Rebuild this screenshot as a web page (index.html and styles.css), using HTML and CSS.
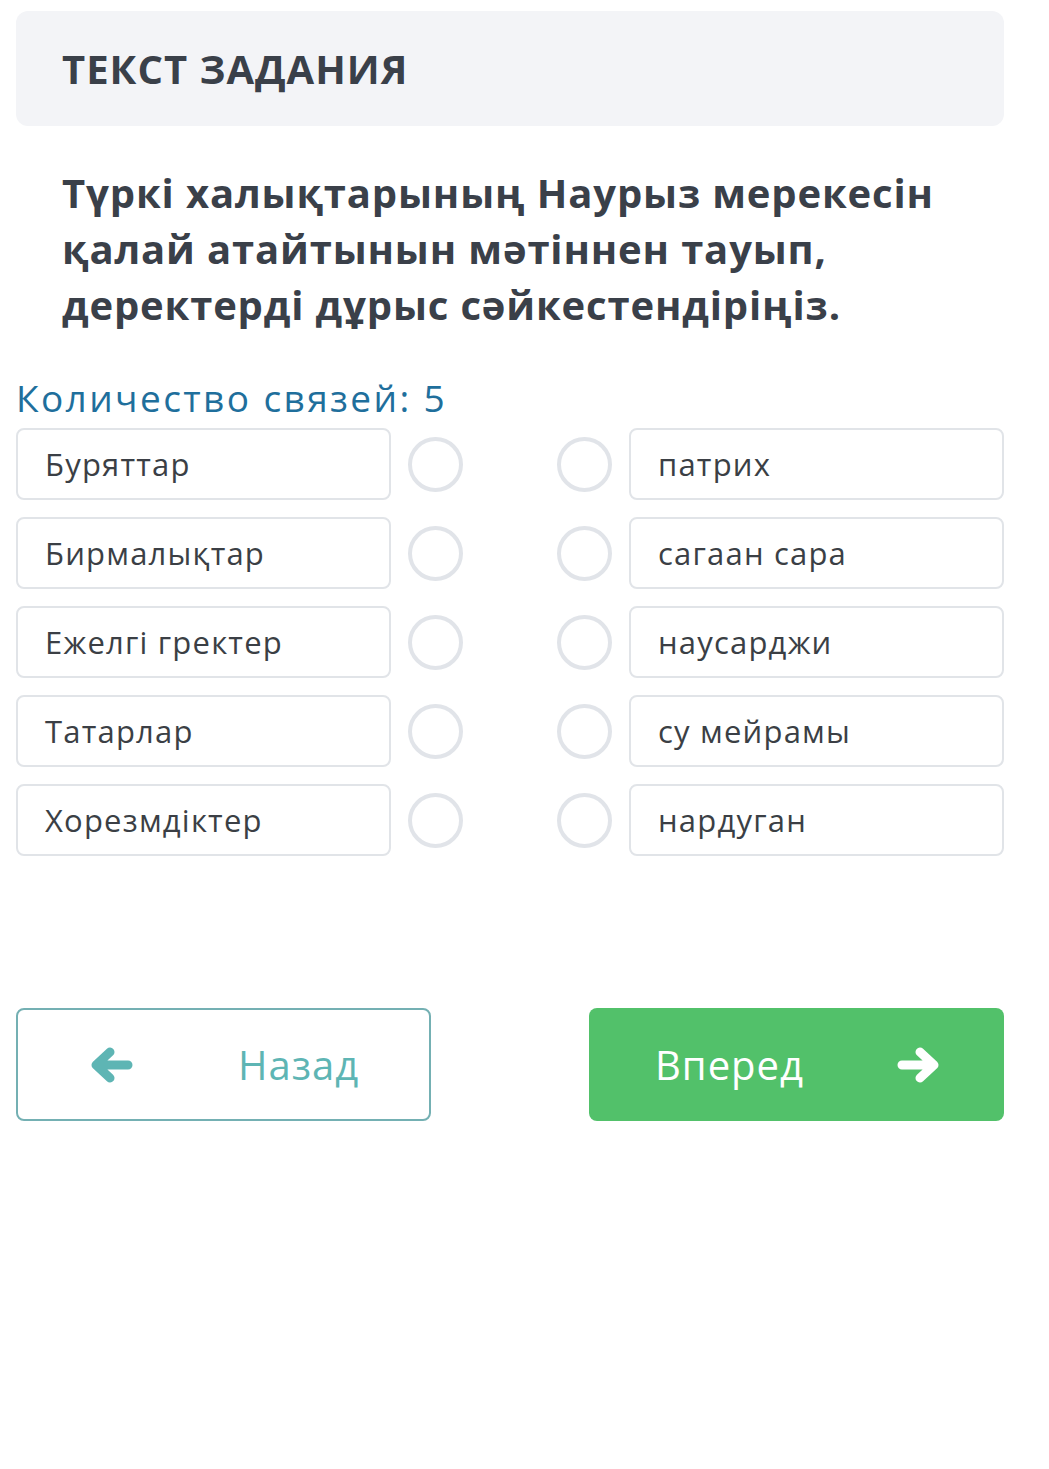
FILE: index.html
```html
<!DOCTYPE html>
<html lang="ru">
<head>
<meta charset="utf-8">
<title>Текст задания</title>
<link rel="stylesheet" href="styles.css">
</head>
<body>

<div id="container">
	<div class="task-header">ТЕКСТ ЗАДАНИЯ</div>

	<p class="task-text">Түркі халықтарының Наурыз мерекесін қалай атайтынын мәтіннен тауып, деректерді дұрыс сәйкестендіріңіз.</p>

	<div class="link-count">Количество связей: 5</div>

	<ul class="match-list">
		<li class="match-row">
			<div class="match-item">Буряттар</div>
			<span class="dot"></span>
			<span class="dot"></span>
			<div class="match-item">патрих</div>
		</li>
		<li class="match-row">
			<div class="match-item">Бирмалықтар</div>
			<span class="dot"></span>
			<span class="dot"></span>
			<div class="match-item">сагаан сара</div>
		</li>
		<li class="match-row">
			<div class="match-item">Ежелгі гректер</div>
			<span class="dot"></span>
			<span class="dot"></span>
			<div class="match-item">наусарджи</div>
		</li>
		<li class="match-row">
			<div class="match-item">Татарлар</div>
			<span class="dot"></span>
			<span class="dot"></span>
			<div class="match-item">су мейрамы</div>
		</li>
		<li class="match-row">
			<div class="match-item">Хорезмдіктер</div>
			<span class="dot"></span>
			<span class="dot"></span>
			<div class="match-item">нардуган</div>
		</li>
	</ul>

	<div class="nav">
		<button class="btn btn-back">
			<svg class="arrow" width="44" height="36" viewBox="0 0 44 36">
				<path d="M38 18H8M20 5L6 18l14 13" fill="none" stroke="currentColor" stroke-width="9" stroke-linecap="round" stroke-linejoin="round"/>
			</svg>
			<span>Назад</span>
		</button>
		<button class="btn btn-next">
			<span>Вперед</span>
			<svg class="arrow" width="44" height="36" viewBox="0 0 44 36">
				<path d="M6 18h30M24 5l14 13-14 13" fill="none" stroke="currentColor" stroke-width="9" stroke-linecap="round" stroke-linejoin="round"/>
			</svg>
		</button>
	</div>
</div>

</body>
</html>
```

FILE: styles.css
```css
html {
	font-family: 'Open Sans', 'Noto Sans', sans-serif;
}

body {
	margin: 0;
	background: #fff;
}

ul {
	list-style: none;
	margin: 0;
	padding: 0;
}

#container {
	margin: 11px 0 0 16px;
	width: 988px;
}

.task-header {
	background-color: #f3f4f7;
	border-radius: 12px;
	color: #3a4049;
	font-size: 40px;
	font-weight: bold;
	height: 115px;
	letter-spacing: 1px;
	line-height: 115px;
	padding: 0 46px;
}

.task-text {
	color: #3a4049;
	font-size: 40px;
	font-weight: bold;
	letter-spacing: 0.85px;
	line-height: 56px;
	margin: 39px 0 0;
	padding: 0 46px;
}

.link-count {
	color: #1f6f9c;
	font-size: 37px;
	letter-spacing: 2.4px;
	line-height: 50px;
	margin-top: 40px;
}

.match-list {
	margin-top: 5px;
}

.match-row {
	align-items: center;
	display: flex;
	margin-bottom: 17px;
}

.match-item {
	border: 2px solid #e1e4e8;
	border-radius: 8px;
	box-sizing: border-box;
	color: #3b3f45;
	font-size: 31px;
	height: 72px;
	letter-spacing: 1.2px;
	line-height: 68px;
	padding: 0 27px;
	width: 375px;
}

.dot {
	border: 4px solid #e1e4e9;
	border-radius: 50%;
	box-sizing: border-box;
	height: 55px;
	margin-left: 17px;
	width: 55px;
}

.dot + .dot {
	margin: 0 17px 0 auto;
}

.nav {
	display: flex;
	justify-content: space-between;
	margin-top: 152px;
}

.btn {
	align-items: center;
	border-radius: 8px;
	box-sizing: border-box;
	display: flex;
	font-family: inherit;
	font-size: 40px;
	height: 113px;
	letter-spacing: 1px;
	width: 415px;
}

.btn-back {
	background: #fff;
	border: 2px solid #74b0b3;
	color: #5eb5b4;
	padding: 0 0 0 72px;
}

.btn-back span {
	margin-left: 104px;
}

.btn-next {
	background: #52c16a;
	border: 0;
	color: #fff;
	padding: 0 0 0 66px;
}

.btn-next span {
	margin-right: 92px;
}
```
